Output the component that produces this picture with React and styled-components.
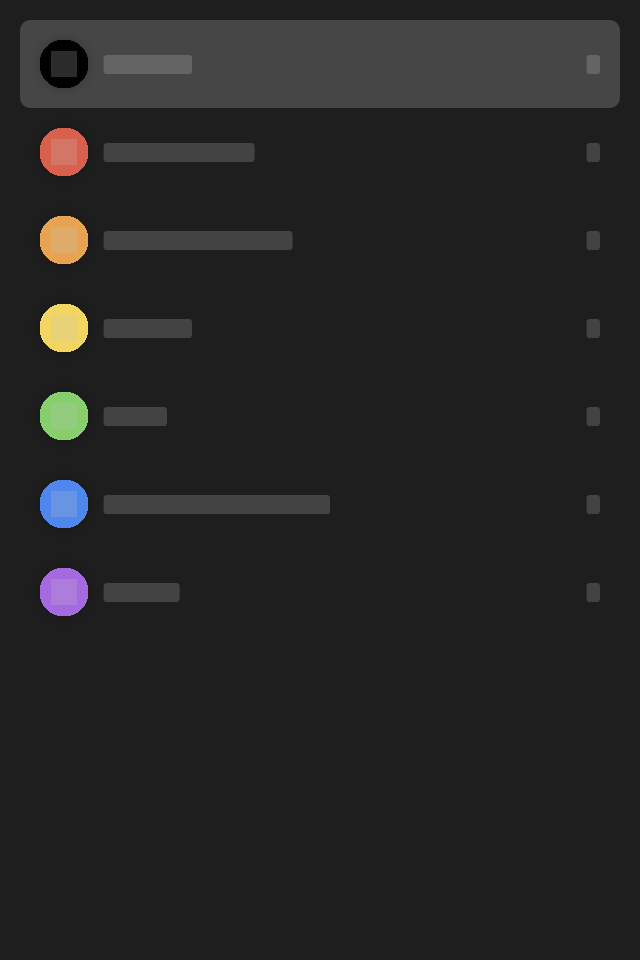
import React from 'react';
import styled, { createGlobalStyle } from 'styled-components';

const GlobalStyle = createGlobalStyle`
  *, *::before, *::after { box-sizing: border-box; }
  body { margin: 0; background: #1e1e1e; font-family: "Liberation Sans", sans-serif; }
`;

const Panel = styled.main`
  min-height: 960px;
  padding: 20px;
  background: #1e1e1e;
`;

const List = styled.ul`
  display: flex;
  flex-direction: column;
  margin: 0;
  padding: 0;
  list-style: none;
`;

const Row = styled.li`
  display: flex;
  align-items: center;
  height: 88px;
  padding: 0 20px;
  border-radius: 10px;
  background: ${({ $selected }) => ($selected ? '#464646' : 'transparent')};
`;

const Badge = styled.div`
  display: flex;
  flex: none;
  width: 48px;
  height: 48px;
  border-radius: 50%;
  box-shadow: 0 0 12px rgba(0, 0, 0, 0.24);
`;

const Dot = styled.svg`
  display: block;
  width: 48px;
  height: 48px;
`;

const Bar = styled.span`
  height: 19px;
  margin-top: 1px;
  border-radius: 3.5px;
  background: ${({ $selected }) => ($selected ? '#646464' : '#434343')};
  box-shadow: -0.4px 0 0 ${({ $selected }) => ($selected ? '#646464' : '#434343')};
`;

const Label = styled(Bar)`
  width: ${({ $width }) => $width}px;
  margin-left: 16px;
  ${({ $shift }) => $shift && `
    transform: translateX(${-$shift}px);
    box-shadow: none;
  `}
`;

const Count = styled(Bar)`
  width: 13px;
  margin-left: auto;
`;

const items = [
  { color: '#000000', width: 88, selected: true },
  { color: '#d9604c', width: 151, shift: 0.4 },
  { color: '#e6a452', width: 189, shift: 0.4 },
  { color: '#f3d562', width: 88 },
  { color: '#86cf6c', width: 63 },
  { color: '#4f87ee', width: 226 },
  { color: '#a66ae0', width: 76, shift: 0.4 },
];

export default function App() {
  return (
    <>
      <GlobalStyle />
      <Panel>
        <List>
          {items.map(({ color, width, selected, shift }) => (
            <Row key={color} $selected={selected}>
              <Badge>
                <Dot viewBox="0 0 48 48" shapeRendering="crispEdges">
                  <circle cx="24" cy="24" r="24.6" fill={color} />
                  <rect x="11" y="11" width="26" height="26" fill="#c4c4c4" fillOpacity="0.22" />
                </Dot>
              </Badge>
              <Label $width={width} $selected={selected} $shift={shift} />
              <Count $selected={selected} />
            </Row>
          ))}
        </List>
      </Panel>
    </>
  );
}
